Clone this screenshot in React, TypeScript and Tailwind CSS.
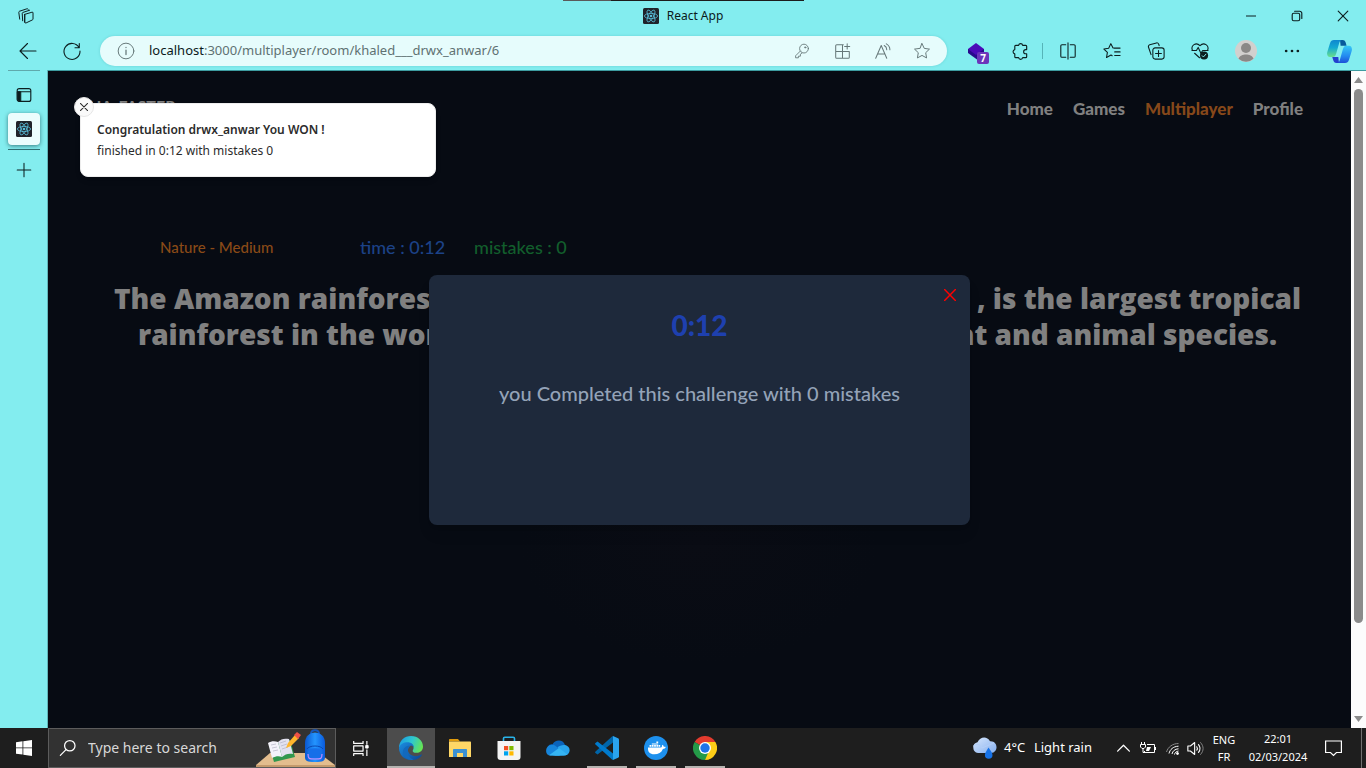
import React from "react";
import type { ReactNode } from "react";

type IconProps = { children: ReactNode; size?: number; className?: string };

function Icon({ children, size = 20, className = "" }: IconProps) {
  return (
    <svg
      width={size}
      height={size}
      viewBox="0 0 20 20"
      fill="none"
      stroke="currentColor"
      strokeWidth="1.1"
      strokeLinecap="round"
      strokeLinejoin="round"
      className={"shrink-0 " + className}
      aria-hidden="true"
    >
      {children}
    </svg>
  );
}

function ToolButton({ label, children, className = "w-11" }: { label: string; children: ReactNode; className?: string }) {
  return (
    <button type="button" aria-label={label} className={"flex h-8 shrink-0 items-center justify-center text-[#0c1f20] " + className}>
      {children}
    </button>
  );
}

function ReactLogo() {
  return (
    <svg width="16" height="16" viewBox="0 0 16 16" className="shrink-0" aria-hidden="true">
      <rect width="16" height="16" rx="1.5" fill="#20232a" />
      <g fill="none" stroke="#58bcd8" strokeWidth="0.8">
        <ellipse cx="8" cy="8" rx="6.6" ry="2.6" />
        <ellipse cx="8" cy="8" rx="6.6" ry="2.6" transform="rotate(60 8 8)" />
        <ellipse cx="8" cy="8" rx="6.6" ry="2.6" transform="rotate(120 8 8)" />
      </g>
      <circle cx="8" cy="8" r="1.3" fill="#58bcd8" />
    </svg>
  );
}

function TitleBar() {
  return (
    <div className="relative flex h-8 items-center justify-between">
      <div className="absolute top-0 left-[563px] flex h-px w-[241px] bg-[#1c1c1c]">
        <div className="w-12 bg-[#5a5a5a]" />
      </div>
      <div className="flex w-[138px] pl-1">
        <ToolButton label="Workspaces">
          <Icon size={18}>
            <path d="M8.5 8.2 16.6 5.8a.9.9 0 0 1 1.2.9v6.6c0 .5-.3.9-.8 1.1l-6.900 3.300a1 1 0 0 1-1.400-.9V8.900M8.500 8.200l-.100 8.600" />
            <path d="M6.300 15.300 5.800 7.200c0-.6.300-1 .900-1.200L14 3.600M3 13.500 2 5.900c0-.6.300-1 .800-1.200L11 2c.7-.2 1.300 0 1.500.6" />
          </Icon>
        </ToolButton>
      </div>
      <div className="flex items-center gap-2 text-xs text-[#0b1a1b]">
        <ReactLogo />
        <span>React App</span>
      </div>
      <div className="flex w-[138px]">
        <ToolButton label="Minimize" className="w-[46px]">
          <Icon size={10}><path strokeWidth="2" d="M0 10h20" /></Icon>
        </ToolButton>
        <ToolButton label="Restore" className="w-[46px]">
          <Icon size={12}>
            <rect x="2" y="5.500" width="12.500" height="12.500" rx="2.500" strokeWidth="1.900" />
            <path strokeWidth="1.900" d="M6 2h8.500A3.500 3.500 0 0 1 18 5.500V14" />
          </Icon>
        </ToolButton>
        <ToolButton label="Close" className="w-[46px]">
          <Icon size={12}><path strokeWidth="1.900" d="m2 2 16 16M18 2 2 18" /></Icon>
        </ToolButton>
      </div>
    </div>
  );
}

function PillButton({ label, children }: { label: string; children: ReactNode }) {
  return (
    <button type="button" aria-label={label} className="flex h-7 w-10 shrink-0 items-center justify-center text-[#667879]">
      {children}
    </button>
  );
}

function CopilotLogo() {
  return (
    <svg width="25" height="23" viewBox="0 0 25 23" aria-hidden="true">
      <defs>
        <linearGradient id="cpA" x1="0" y1="0" x2="0" y2="1">
          <stop offset="0" stopColor="#0f86cf" />
          <stop offset="0.450" stopColor="#14a9d2" />
          <stop offset="1" stopColor="#6be08a" />
        </linearGradient>
        <linearGradient id="cpB" x1="0" y1="0" x2="0" y2="1">
          <stop offset="0" stopColor="#36c8f6" />
          <stop offset="0.600" stopColor="#2389f0" />
          <stop offset="1" stopColor="#1b4fd8" />
        </linearGradient>
      </defs>
      <path d="M13 0h2.500c2 0 2.700 1.200 3.300 3l.8 2.700h-6Z" fill="#075a9c" />
      <path d="M12 23H9.500c-2 0-2.700-1.200-3.300-3l-.900-2.900h6Z" fill="#2341cf" />
      <path d="M7 0h8c-1.500 0-2.200 1.200-2.800 3L9.500 12.500c-.9 3-1.500 4.600-3.800 4.600H3C.5 17.100-.4 14.500.3 11.900L3 3.200C3.700 1 5 0 7 0Z" fill="url(#cpA)" />
      <path d="M18 23h-8c1.500 0 2.200-1.200 2.800-3l2.700-9.500c.9-3 1.500-4.700 3.800-4.700H22c2.500 0 3.400 2.700 2.700 5.300L22 19.800C21.300 22 20 23 18 23Z" fill="url(#cpB)" />
    </svg>
  );
}

function Toolbar() {
  return (
    <div className="flex h-[38px] items-center pr-0.5">
      <ToolButton label="Back" className="ml-1.5 w-11">
        <Icon><path d="M18 10H2M9.500 2.500 2 10l7.500 7.500" /></Icon>
      </ToolButton>
      <ToolButton label="Refresh">
        <Icon><path d="M17 6.500A8 8 0 1 0 18 10M17.300 2.500v4.300H13" /></Icon>
      </ToolButton>
      <div className="ml-1.5 flex h-[30px] min-w-0 flex-1 items-center rounded-full bg-[#e6fcfc] pr-[5px] pl-4 shadow-[0_0_3px_rgba(0,110,120,0.2)]">
        <button type="button" aria-label="View site information" className="flex w-5 shrink-0 justify-center text-[#667879]">
          <Icon size={18}>
            <circle cx="10" cy="10" r="8.700" />
            <path strokeWidth="1.400" d="M10 9v5M10 6v.2" />
          </Icon>
        </button>
        <p className="ml-[13px] min-w-0 flex-1 truncate text-[13px] text-[#5f7172]">
          <span className="text-[#0b1a1b]">localhost</span>:3000/multiplayer/room/khaled___drwx_anwar/6
        </p>
        <PillButton label="Passwords">
          <Icon size={16}>
            <circle cx="12.500" cy="7" r="5.500" />
            <path d="m8 10-6 6v2.500h3.500V16.500H8V14l2-1.500" />
            <circle cx="14" cy="5.500" r=".8" />
          </Icon>
        </PillButton>
        <PillButton label="Apps">
          <Icon size={17}><path strokeWidth="1.200" d="M11 2H3.200C2.500 2 2 2.500 2 3.200v13.600c0 .700.500 1.200 1.200 1.200h13.600c.700 0 1.200-.500 1.200-1.200V10H2M10 2v16M15.500 1v6M12.500 4h6" /></Icon>
        </PillButton>
        <PillButton label="Read aloud">
          <Icon size={17}><path strokeWidth="1.200" d="M2 18 8.500 3 15 18M4.200 13h8.600M12 3c2 1 3 2.600 3 4.800M14.500 1c2.800 1.500 4.200 4 4.200 7" /></Icon>
        </PillButton>
        <PillButton label="Add to favorites">
          <Icon size={18}><path d="m10 1.800 2.500 5.300 5.800.8-4.200 4 1 5.800-5.100-2.800-5.100 2.800 1-5.800-4.200-4 5.800-.8Z" /></Icon>
        </PillButton>
      </div>
      <ToolButton label="Extension, 7 items" className="ml-[7px] w-11">
        <span className="relative flex">
          <svg width="18" height="18" viewBox="0 0 18 18" aria-hidden="true">
            <path d="M1 7v4l9 6.500 7-5.500V7Z" fill="#270a8c" />
            <path d="m9 1 8 6-8 6-8-6Z" fill="#4a0bb8" />
          </svg>
          <span className="absolute top-2.5 left-2.5 flex h-3 w-3 items-center justify-center rounded-xs bg-[#6b35bb] text-[10px] font-bold text-white">7</span>
        </span>
      </ToolButton>
      <ToolButton label="Extensions">
        <Icon size={19}><path strokeWidth="1.200" d="M5 3.500h3a2.200 2.200 0 0 1 4.300 0h3.200c.6 0 1 .4 1 1V8h-1a2.200 2.200 0 0 0 0 4.400h1v3.100c0 .6-.4 1-1 1h-3.200a2.200 2.200 0 0 1-4.300 0H5c-.6 0-1-.4-1-1v-3a2.300 2.300 0 0 1 0-4.500v-3.500c0-.6.400-1 1-1Z" /></Icon>
      </ToolButton>
      <div className="mr-[3px] h-4 w-px shrink-0 bg-[#56b4b8]" />
      <ToolButton label="Split screen">
        <Icon size={18}><path strokeWidth="1.200" d="M7.500 3H3.300C2.500 3 2 3.500 2 4.300v11.400c0 .8.500 1.300 1.300 1.300h4.200M12.500 3h4.200c.8 0 1.300.5 1.300 1.300v11.400c0 .8-.5 1.300-1.300 1.300h-4.200M10 1v18" /></Icon>
      </ToolButton>
      <ToolButton label="Favorites">
        <Icon size={18}><path strokeWidth="1.200" d="M12 6.800h7M13 11h6M13 15h6M11 6.500 8.700 1.800 6.300 7 1 7.800l3.900 3.800-1 5.600 5-2.700 1.300.7" /></Icon>
      </ToolButton>
      <ToolButton label="Collections">
        <Icon size={18}>
          <rect x="6.500" y="6.500" width="12.500" height="12.500" rx="2.500" strokeWidth="1.200" />
          <path strokeWidth="1.200" d="M12.800 9.500v6.500M9.500 12.800H16M4.500 14 1.600 5.600A2 2 0 0 1 3 3.100L10.500 1a2 2 0 0 1 2.500 1.500l.5 1.500" />
        </Icon>
      </ToolButton>
      <ToolButton label="Browser essentials">
        <Icon size={18}>
          <path strokeWidth="1.200" d="M1.500 9C-.5 4 5.500-.5 10 4c4.500-4.500 10.500 0 8.500 5M1 9.500h5l2-3.500 3 6.500 2-3h6M4 12.500l5.500 5" />
          <circle cx="14.500" cy="15" r="4.500" fill="currentColor" stroke="none" />
          <path stroke="#83edef" d="m12.500 15.300 1.300 1.300 2.700-3" />
        </Icon>
      </ToolButton>
      <ToolButton label="Profile account" className="w-12">
        <svg width="22" height="22" viewBox="0 0 22 22" aria-hidden="true">
          <circle cx="11" cy="11" r="11" fill="#d2d0ce" />
          <circle cx="11" cy="8" r="5" fill="#8a8886" />
          <path d="M3.500 18.800C4.500 15.500 8 14.500 11 14.500s6.500 1 7.500 4.300A11 11 0 0 1 3.500 18.800Z" fill="#8a8886" />
        </svg>
      </ToolButton>
      <ToolButton label="Settings and more">
        <Icon size={18}><g fill="currentColor" stroke="none"><circle cx="3.500" cy="10" r="1.500" /><circle cx="10" cy="10" r="1.500" /><circle cx="16.500" cy="10" r="1.500" /></g></Icon>
      </ToolButton>
      <ToolButton label="Copilot" className="w-[50px]"><CopilotLogo /></ToolButton>
    </div>
  );
}

function SideTabs() {
  return (
    <aside className="flex w-12 shrink-0 flex-col items-center border-r border-[#5fb6b9]">
      <div className="h-px w-8 bg-[#5fa9ac]" />
      <button type="button" aria-label="Tab actions" className="mt-2 flex h-8 w-8 items-center justify-center text-[#0c1f20]">
        <Icon size={16}>
          <rect x="1.500" y="2" width="17" height="16" rx="2.500" strokeWidth="1.400" />
          <path strokeWidth="1.400" d="M2 6h16" />
          <path d="M2 6h4v12H3.500L2 16Z" fill="currentColor" />
        </Icon>
      </button>
      <button type="button" aria-label="React App tab" className="mt-0.5 flex h-8 w-8 items-center justify-center rounded bg-[#ebfdfd] shadow-[0_1px_4px_rgba(0,50,55,0.6)]">
        <ReactLogo />
      </button>
      <div className="mt-1 h-px w-8 bg-[#2d7073]" />
      <button type="button" aria-label="New tab" className="mt-1 flex h-8 w-8 items-center justify-center text-[#0c1f20]">
        <Icon size={16}><path strokeWidth="1.300" d="M10 1.500v17M1.500 10h17" /></Icon>
      </button>
    </aside>
  );
}

function Toast() {
  return (
    <div role="status" className="absolute top-8 left-8 w-[356px] rounded-lg border border-[#ededed] bg-white px-4 py-[15px] text-xs text-[#2b2b2b] shadow-md">
      <button type="button" aria-label="Close toast" className="absolute -top-[7px] -left-[7px] flex h-5 w-5 items-center justify-center rounded-full border border-[#e6e6e6] bg-[#fafafa]">
        <Icon size={8}><path strokeWidth="2.600" d="m1 1 18 18M19 1 1 19" /></Icon>
      </button>
      <p className="leading-[21px] font-semibold">Congratulation drwx_anwar You WON !</p>
      <p className="leading-[21px]">finished in 0:12 with mistakes 0</p>
    </div>
  );
}

function ResultModal() {
  return (
    <div className="absolute inset-0 flex items-center justify-center">
      <div role="dialog" aria-label="Challenge result" className="relative flex h-[250px] w-[541px] flex-col items-center rounded-lg bg-[#1e293b] pt-8 shadow-lg">
        <button type="button" aria-label="Close result" className="absolute top-3 right-3 flex h-4 w-4 items-center justify-center text-[#ff0000]">
          <Icon size={12}><path strokeWidth="2.400" d="m1 1 18 18M19 1 1 19" /></Icon>
        </button>
        <h2 className="font-[Lato,sans-serif] text-[28px] leading-9 font-black text-[#1e40af]">0:12</h2>
        <p className="mt-9 font-[Lato,sans-serif] text-xl leading-7 font-medium text-[#94a3b8]">you Completed this challenge with 0 mistakes</p>
      </div>
    </div>
  );
}

function GamePage() {
  return (
    <main className="relative min-w-0 flex-1 overflow-hidden bg-[#070b13] bg-[radial-gradient(ellipse_180px_120px_at_50%_72%,#0a0c14,#070b13)]">
      <header className="flex h-[76px] items-center justify-between pr-12 pl-[30px] font-[Lato,sans-serif] font-bold text-[#808080]">
        <span className="mt-[23px] self-start text-base">KHA-FASTER</span>
        <nav className="flex gap-5 text-[17px] leading-7 font-black">
          <a href="#home">Home</a>
          <a href="#games">Games</a>
          <a href="#multiplayer" className="text-[#86481a]">Multiplayer</a>
          <a href="#profile">Profile</a>
        </nav>
      </header>
      <div className="mt-[86px] flex items-center pl-28 font-[Lato,sans-serif] leading-7 font-medium">
        <span className="w-[200px] text-[15px] text-[#8a4a17]">Nature - Medium</span>
        <span className="w-[114px] text-lg text-[#1c4287]">time : 0:12</span>
        <span className="text-lg text-[#125e2c]">mistakes : 0</span>
      </div>
      <div className="mt-[19px] pr-[50px] pl-[66px] font-['Open_Sans','Noto_Sans',sans-serif] text-[28px] leading-9 font-extrabold text-[#808080]">
        <p className="flex justify-between"><span>The Amazon rainforest</span><span>, is the largest tropical</span></p>
        <p className="flex justify-between px-6"><span>rainforest in the world</span><span>plant and animal species.</span></p>
      </div>
      <ResultModal />
      <Toast />
    </main>
  );
}

function ScrollBar() {
  return (
    <div className="flex w-[15px] shrink-0 flex-col items-center justify-between bg-[#fcfcfc] py-1.5">
      <svg width="9" height="6" viewBox="0 0 9 6" aria-hidden="true"><path d="M4.500 0 9 6H0Z" fill="#8b8b8b" /></svg>
      <div className="mt-1.5 mb-[93px] w-[9px] flex-1 rounded-full bg-[#8b8b8b]" />
      <svg width="9" height="6" viewBox="0 0 9 6" aria-hidden="true"><path d="M0 0h9L4.500 6Z" fill="#8b8b8b" /></svg>
    </div>
  );
}

function DeskArt() {
  return (
    <svg width="80" height="38" viewBox="0 0 80 38" className="shrink-0" aria-hidden="true">
      <defs><linearGradient id="bag" x1="0" x2="1"><stop stopColor="#0a57d0" /><stop offset=".5" stopColor="#2495ff" /><stop offset="1" stopColor="#0a5adc" /></linearGradient></defs>
      <path d="M15 24h49l16 12H1Z" fill="#e3bd8e" />
      <path d="M1 36h79v2H1Z" fill="#c49a6c" />
      <path d="m14 16 5 17 21-5-5-17Z" fill="#31984e" />
      <path d="m13 14 4 15c4-2 7-2 10-1l-4-15c-3-1-7-1-10 1Z" fill="#f4f3fb" />
      <path d="m23 13 4 15c3-3 7-4 11-3l-4-15c-5-1-8 0-11 3Z" fill="#e2e1ef" />
      <path d="m16 16 5-1m-4 4 5-1m-4 4 5-1m2-7 6-2m-5 5 6-2m-5 5 6-2" stroke="#aaa9bd" strokeWidth=".6" />
      <path d="m31 19 2-5 7-8 4 3-8 8Z" fill="#ffb52c" />
      <path d="m39 6 3-3 4 3-3 4Z" fill="#ef5145" />
      <path d="M56 5c0-5 8-5 8 0" fill="none" stroke="#1557bd" strokeWidth="2" />
      <path d="M50 14c0-14 20-14 20 0v14c0 4-2 5-10 5s-10-1-10-5Z" fill="url(#bag)" />
      <path d="M53 23c1-5 13-5 14 0v6H53Z" fill="#166fe9" />
      <path d="M52 20c2-4 14-4 16 0" fill="none" stroke="#0a49b4" />
      <path d="M53 25c0 5 1 5 7 5s7 0 7-5" fill="none" stroke="#c58cff" strokeWidth="1.200" />
    </svg>
  );
}

function TaskApp({ label, children, state = "" }: { label: string; children: ReactNode; state?: "" | "active" | "open" }) {
  return (
    <button type="button" aria-label={label} className={"flex h-10 w-12 shrink-0 flex-col items-center justify-between " + (state === "active" ? "bg-[#4c4c4c]" : "")}>
      <span className="flex h-[38px] items-center pt-0.5">{children}</span>
      <span className={state === "active" ? "h-0.5 w-12 bg-[#b5b3b0]" : state === "open" ? "h-0.5 w-10 bg-[#b5b3b0]" : "h-0.5"} />
    </button>
  );
}

function TaskApps() {
  return (
    <div className="ml-[3px] flex gap-px">
      <TaskApp label="Microsoft Edge" state="active">
        <svg width="24" height="24" viewBox="0 0 24 24" aria-hidden="true">
          <defs>
            <linearGradient id="edgeTop" x1="0" x2="1" y1=".3" y2=".6"><stop stopColor="#1b9de2" /><stop offset=".5" stopColor="#2fc8ce" /><stop offset="1" stopColor="#67e64f" /></linearGradient>
            <linearGradient id="edgeLow" x1="0" x2="1" y1="0" y2="1"><stop stopColor="#1b8de0" /><stop offset="1" stopColor="#0b4594" /></linearGradient>
          </defs>
          <path d="M0 12C0 4.500 5.500 0 12 0c7 0 12 5 12 10.500 0 4-3 6.300-6.400 6.300-3 0-4.600-1.300-3.600-2.900 2-3-1-6.400-5-6.400C4.500 7.500 1.300 9.500 0 12Z" fill="url(#edgeTop)" />
          <path d="M0 12c1-4 4.500-5.800 8.500-5.800 4 0 6.500 2.500 6.300 5.100-.8-1.400-2-1.800-3.300-1.500-4.500 2-3.200 8.500 2.500 10 3.600.9 6.500-.2 8.200-1.300.5-.3 1 .1.600.7A12 12 0 0 1 12 24C5 24 0 18.500 0 12Z" fill="url(#edgeLow)" />
          <path d="M11.500 9.800C8 12 7 21 14.500 23.700 8 25 3.500 20.500 4 15.500c.3-3.500 3.500-6.500 7.500-5.700Z" fill="#1269bd" />
        </svg>
      </TaskApp>
      <TaskApp label="File Explorer">
        <svg width="22" height="19" viewBox="0 0 22 19" aria-hidden="true">
          <path d="M0 1c0-.6.400-1 1-1h8l2 2.500H0Z" fill="#e09b0c" />
          <path d="M0 2.500h21c.6 0 1 .4 1 1V18H0Z" fill="#ffd766" />
          <path d="M4 18v-7c0-.6.400-1 1-1h12c.6 0 1 .4 1 1v7h-4v-4H8v4Z" fill="#3c91d2" />
        </svg>
      </TaskApp>
      <TaskApp label="Microsoft Store">
        <svg width="24" height="24" viewBox="0 0 24 24" aria-hidden="true">
          <path d="M6.500 7V2.500C6.500 1.700 7 1.200 7.800 1.200h8.400c.8 0 1.300.5 1.300 1.300V7" fill="none" stroke="#29b4ea" strokeWidth="1.600" />
          <path d="M0.500 5h23v16c0 2-1 3-3 3h-17c-2 0-3-1-3-3Z" fill="#f4f4f4" />
          <path d="M7 10h4.200v4.200H7Z" fill="#f25022" /><path d="M12.300 10h4.200v4.200h-4.200Z" fill="#7fba00" /><path d="M7 15.300h4.200v4.200H7Z" fill="#00a4ef" /><path d="M12.300 15.300h4.200v4.200h-4.200Z" fill="#ffb900" />
        </svg>
      </TaskApp>
      <TaskApp label="OneDrive">
        <svg width="24" height="16" viewBox="0 0 24 16" aria-hidden="true">
          <path d="M4 12 2 7c1-2.500 3-3 4.500-2.500C8.500-.5 17-1.500 19 5l-7 6Z" fill="#0a63bb" />
          <path d="M12 7c2-2 8-3.500 10.500 0 3 4-.5 8.500-4 8.500H9Z" fill="#28a4ed" />
          <path d="M1 14C-1.500 10 1.500 4.500 6.500 4.800c2.500.2 3 1 13.500 9.700-1 1-15 1-15 1s-3 0-4-1.500Z" fill="#1685dc" />
          <path d="M3 15.200 13 8l8.500 6.500c-2 1.500-15.500 1.300-18.500.7Z" fill="#35b4f3" />
        </svg>
      </TaskApp>
      <TaskApp label="Visual Studio Code" state="open">
        <svg width="24" height="24" viewBox="0 0 24 24" aria-hidden="true">
          <path d="M18 0v6.500L2.500 18.500.5 17c-.6-.5-.6-1 0-1.500L17 .5Z" fill="#0065a9" />
          <path d="M18 24v-6.500L2.500 5.500.5 7c-.6.500-.6 1 0 1.500L17 23.500Z" fill="#007acc" />
          <path d="m18 0 5 2.300c.6.3 1 .8 1 1.500v16.400c0 .7-.4 1.200-1 1.500L18 24Z" fill="#2aa4f0" />
        </svg>
      </TaskApp>
      <TaskApp label="Docker Desktop" state="open">
        <svg width="24" height="24" viewBox="0 0 24 24" aria-hidden="true">
          <circle cx="12" cy="12" r="12" fill="#1d90ed" />
          <path d="M4 11.500h13c.8 0 1-.5.9-1.700l.6-1c.9.600 1.200 1.200 1.200 2 .9-.1 1.600 0 2.100.3-.4 1.300-1.500 1.800-2.900 1.800-1.500 3.700-4.500 5.400-8.600 5.400-4.500 0-6.600-2.300-6.300-6.800Z" fill="#fff" />
          <path d="M5.500 9h1.800v1.800H5.500Zm2.300 0h1.800v1.800H7.800Zm2.300 0h1.800v1.800h-1.800Zm2.300 0h1.800v1.800h-1.800Zm2.300 0h1.500v1.800h-1.500ZM7.800 7.500h6.400v1H7.800Zm4.600-2h1.800v1.500h-1.800Z" fill="#fff" />
        </svg>
      </TaskApp>
      <TaskApp label="Google Chrome" state="open">
        <svg width="24" height="24" viewBox="0 0 24 24" aria-hidden="true">
          <path d="M12 12 1.600 6a12 12 0 0 1 20.800 0Z" fill="#e33b2e" />
          <path d="M12 12 1.600 6A12 12 0 0 0 12 24l5.200-9Z" fill="#249a48" />
          <path d="M12 12h5.200L12 24A12 12 0 0 0 22.400 6H12Z" fill="#fdcd17" />
          <circle cx="12" cy="12" r="6" fill="#fff" /><circle cx="12" cy="12" r="4.700" fill="#1f74e8" />
        </svg>
      </TaskApp>
    </div>
  );
}

function TrayButton({ label, className, children }: { label: string; className: string; children: ReactNode }) {
  return <button type="button" aria-label={label} className={"flex h-10 shrink-0 items-center justify-center " + className}>{children}</button>;
}

function Taskbar() {
  return (
    <footer className="flex h-10 shrink-0 items-center bg-[#1e1e1e] text-white">
      <TrayButton label="Start" className="w-12">
        <svg width="16" height="16" viewBox="0 0 16 16" fill="#fff" aria-hidden="true"><path d="m0 2.200 6.500-.9v6.200H0ZM7.300 1.200 16 0v7.500H7.300ZM0 8.300h6.500v6.300L0 13.700ZM7.300 8.300H16V16l-8.700-1.200Z" /></svg>
      </TrayButton>
      <div className="flex h-10 w-72 shrink-0 items-center border border-[#5c5c5c] bg-[#323232] pl-2.5">
        <label htmlFor="taskbar-search" aria-label="Search">
          <Icon size={18}><circle cx="12" cy="7.500" r="5.800" strokeWidth="1.400" /><path strokeWidth="1.400" d="M7.800 11.800 1.500 18.200" /></Icon>
        </label>
        <input id="taskbar-search" aria-label="Search" type="text" placeholder="Type here to search" className="ml-[11px] w-0 min-w-0 flex-1 bg-transparent text-sm text-white outline-none placeholder:text-[#d8d8d8]" />
        <DeskArt />
      </div>
      <TrayButton label="Task view" className="w-12">
        <Icon size={17}><path strokeWidth="1.400" strokeLinecap="square" d="M2 2v2h11V2M2 18v-2h11v2M2 7h11v6H2ZM17.500 2v3M17.500 12v6" /><path d="M16.500 6.500h2.500v3h-2.500Z" fill="currentColor" /></Icon>
      </TrayButton>
      <TaskApps />
      <div className="flex-1" />
      <button type="button" className="flex h-10 shrink-0 items-center text-[13px]">
        <svg width="25" height="22" viewBox="0 0 25 22" aria-hidden="true">
          <defs><linearGradient id="cloud" x1="0" x2="1" y1="0" y2="1"><stop stopColor="#d7e7fd" /><stop offset="1" stopColor="#86afee" /></linearGradient></defs>
          <path d="M6 16A5.500 5.500 0 0 1 5.500 5.200C8-.5 15-1.500 18 4.200 26 3.500 27 15.500 19 16Z" fill="url(#cloud)" />
          <path d="M1 9.500C4 6 9 7 10 11l12-5" fill="none" stroke="#b4cff8" />
          <path d="M16.500 10.500c3 4 4 6 4 7.500a3.800 3.800 0 0 1-7.600 0c0-1.500 1-3.500 3.600-7.500Z" fill="#1672e8" />
        </svg>
        <span className="ml-[7px] flex w-[88px] justify-between whitespace-nowrap"><span>4°C</span><span>Light rain</span></span>
      </button>
      <TrayButton label="Show hidden icons" className="ml-[18px] w-[26px]">
        <Icon size={13}><path strokeWidth="2" d="m1 14 9-9 9 9" /></Icon>
      </TrayButton>
      <TrayButton label="Battery" className="w-6">
        <svg width="16" height="12" viewBox="0 0 16 12" fill="none" stroke="#fff" aria-hidden="true"><path d="M7 2.500h7.500v8h-10V9M15.500 5v3M1.500 0v2M4.500 0v2M.5 2.500h5V5L4 6.500H2L.5 5ZM3 7v3.500h2" /><path d="M7 5h4l-2 4H6Z" fill="#fff" stroke="none" /></svg>
      </TrayButton>
      <TrayButton label="Wi-Fi" className="w-6">
        <svg width="13" height="13" viewBox="0 0 13 13" fill="none" stroke="#fff" aria-hidden="true"><path d="M.5 10C2 5 6.500 1.500 12.500 1.500" stroke="#888" /><path d="M3 11.500C4 7.500 7 4.500 12.500 4.200M6 12c.6-3 3-5 6.500-5.200M8.500 12.500c.5-2 1.500-3 4-3.500" /><circle cx="11.500" cy="11.500" r="1" fill="#fff" /></svg>
      </TrayButton>
      <TrayButton label="Volume" className="w-[22px]">
        <Icon size={17}><path d="M1 7v6h3l5 4V3L4 7ZM11.500 8c1 1.500 1 2.800 0 4M13.500 5.500c2.500 3 2.500 6 0 9" strokeWidth="1.300" /><path d="M16 3c4 4.500 4 9.500 0 14" stroke="#888" /></Icon>
      </TrayButton>
      <button type="button" className="flex h-10 w-9 shrink-0 flex-col items-center justify-center text-[11px] leading-[17px]"><span>ENG</span><span>FR</span></button>
      <button type="button" className="flex h-10 w-[72px] shrink-0 flex-col items-center justify-center text-[11px] leading-[18px]"><span>22:01</span><span>02/03/2024</span></button>
      <TrayButton label="Notifications" className="w-[38px]">
        <svg width="17" height="17" viewBox="0 0 17 17" fill="none" stroke="#fff" strokeWidth="1.200" aria-hidden="true"><path d="M.6 1h15.800v11.500h-5L8.500 15.500l-3-3H.6Z" /></svg>
      </TrayButton>
      <div className="ml-[9px] h-10 w-[5px] border-l border-[#707070]" />
    </footer>
  );
}

export default function App() {
  return (
    <div className="flex h-screen min-h-[600px] flex-col bg-[#83edef] font-['Noto_Sans','Open_Sans',sans-serif]">
      <TitleBar />
      <Toolbar />
      <div className="flex min-h-0 flex-1">
        <SideTabs />
        <div className="flex min-w-0 flex-1 border-t border-[#3d9ca0]">
          <GamePage />
          <ScrollBar />
        </div>
      </div>
      <Taskbar />
    </div>
  );
}
